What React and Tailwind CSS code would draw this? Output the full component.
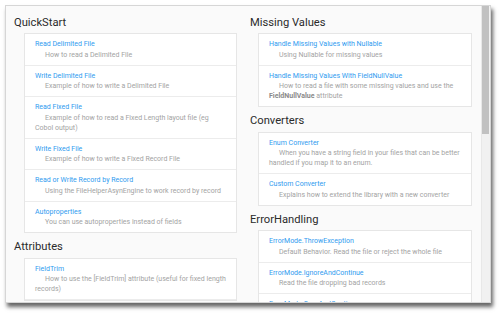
import React from 'react';

const leftSections = [
  {
    title: 'QuickStart',
    items: [
      { name: 'Read Delimited File', desc: 'How to read a Delimited File' },
      { name: 'Write Delimited File', desc: 'Example of how to write a Delimited File' },
      { name: 'Read Fixed File', desc: 'Example of how to read a Fixed Length layout file (eg Cobol output)' },
      { name: 'Write Fixed File', desc: 'Example of how to write a Fixed Record File' },
      { name: 'Read or Write Record by Record', desc: 'Using the FileHelperAsynEngine to work record by record' },
      { name: 'Autoproperties', desc: 'You can use autoproperties instead of fields' }
    ]
  },
  {
    title: 'Attributes',
    items: [
      { name: 'FieldTrim', desc: 'How to use the [FieldTrim] attribute (useful for fixed length records)' }
    ]
  }
];

const rightSections = [
  {
    title: 'Missing Values',
    items: [
      { name: 'Handle Missing Values with Nullable', desc: 'Using Nullable for missing values' },
      {
        name: 'Handle Missing Values With FieldNullValue',
        desc: (
          <>
            How to read a file with some missing values and use the{' '}
            <b className="font-bold text-[#8a8a8a]">FieldNullValue</b> attribute
          </>
        )
      }
    ]
  },
  {
    title: 'Converters',
    items: [
      { name: 'Enum Converter', desc: 'When you have a string field in your files that can be better handled if you map it to an enum.' },
      { name: 'Custom Converter', desc: 'Explains how to extend the library with a new converter' }
    ]
  },
  {
    title: 'ErrorHandling',
    items: [
      { name: 'ErrorMode.ThrowException', desc: 'Default Behavior. Read the file or reject the whole file' },
      { name: 'ErrorMode.IgnoreAndContinue', desc: 'Read the file dropping bad records' },
      { name: 'ErrorMode.SaveAndContinue' }
    ]
  }
];

const Section = ({ section, first, indent }) => (
  <div className={first ? 'pt-[9.5px]' : 'pt-[7px]'}>
    <h2 className="text-[11.2px] leading-[13px] h-[13px] text-[#2b2b2b] font-normal whitespace-nowrap">
      {section.title}
    </h2>
    <ul className={`mt-[4.5px] bg-white border border-[#e6e6e6] ${indent}`}>
      {section.items.map((item, index) => (
        <li
          key={index}
          className={`px-[10px] py-[5px] ${index < section.items.length - 1 || section.items.length === 1 ? 'border-b border-[#ececec]' : ''}`}
        >
          <div className="text-[7px] leading-[10.5px] text-[#2f9bef] whitespace-nowrap">{item.name}</div>
          {item.desc && (
            <div className="text-[7px] leading-[10px] text-[#a3a3a3] indent-[10px]">{item.desc}</div>
          )}
        </li>
      ))}
    </ul>
  </div>
);

const App = () => {
  return (
    <div className="w-[501px] h-[314px] bg-white pt-[5px] pl-[5px] overflow-hidden" style={{ fontFamily: 'Roboto, "Noto Sans", sans-serif' }}>
      <div className="w-[486px] h-[298px] flex bg-[#fafafa] border border-[#d6d6d6] overflow-hidden shadow-[2px_4px_4px_rgba(0,0,0,0.6)]">
        <div className="flex-1 overflow-hidden pl-[8px] pr-[10px]">
          <div className="grid grid-cols-[223px_222px] gap-x-[13px]">
            <div>
              {leftSections.map((s, i) => (
                <Section key={i} section={s} first={i === 0} indent="ml-[10px]" />
              ))}
            </div>
            <div>
              {rightSections.map((s, i) => (
                <Section key={i} section={s} first={i === 0} indent="ml-[8px]" />
              ))}
            </div>
          </div>
        </div>
        <div className="w-[9px] bg-[#f1f1f1] border-l border-[#e8e8e8]">
          <div className="w-[7px] h-[128px] bg-[#c1c1c1]" />
        </div>
      </div>
    </div>
  );
};

export default App;
